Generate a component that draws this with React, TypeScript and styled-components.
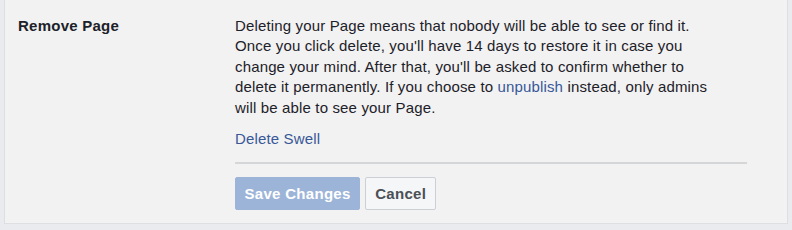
import React from "react";
import styled, { createGlobalStyle } from "styled-components";

const Global = createGlobalStyle`
  html, body { margin: 0; padding: 0; background: #e9ebee; }
  body { font-family: "Liberation Sans", Arial, sans-serif; }
`;

const Page = styled.div`
  width: 792px;
  height: 230px;
  background: #e9ebee;
  padding: 0 4px 0 4px;
  box-sizing: border-box;
`;

const Panel = styled.div`
  background: #f2f2f2;
  border: 1px solid #dddfe2;
  border-top: none;
  height: 224px;
  box-sizing: border-box;
  display: grid;
  grid-template-columns: 217px 1fr;
  padding: 16px 40px 0 13px;
`;

const Label = styled.div`
  font-size: 15px;
  letter-spacing: 0.25px;
  font-weight: bold;
  color: #1d2129;
  line-height: 20px;
`;

const Content = styled.div`
  display: flex;
  flex-direction: column;
`;

const Text = styled.p`
  margin: 0;
  font-size: 15px;
  letter-spacing: 0.15px;
  line-height: 20.4px;
  color: #1d2129;
`;

const Link = styled.a`
  color: #385898;
  text-decoration: none;
  cursor: pointer;
`;

const DeleteLink = styled(Link)`
  font-size: 15px;
  letter-spacing: 0.15px;
  line-height: 20px;
  margin-top: 11px;
`;

const Divider = styled.div`
  height: 2px;
  background: #d5d6d8;
  margin-top: 13px;
`;

const Actions = styled.div`
  display: flex;
  gap: 5px;
  margin-top: 13px;
`;

const Button = styled.button<{ $primary?: boolean }>`
  font-family: "Liberation Sans", Arial, sans-serif;
  font-size: 15px;
  letter-spacing: 0.3px;
  font-weight: bold;
  height: 33px;
  padding: 0 ${(p) => (p.$primary ? "8.5px" : "9px")};
  border-radius: 2px;
  border: 1px solid ${(p) => (p.$primary ? "#9cb4d8" : "#ccd0d5")};
  background: ${(p) => (p.$primary ? "#9cb4d8" : "#f5f6f7")};
  color: ${(p) => (p.$primary ? "#ffffff" : "#4b4f56")};
  cursor: pointer;
`;

export default function App() {
  return (
    <>
      <Global />
      <Page>
        <Panel>
          <Label>Remove Page</Label>
          <Content>
            <Text>
              Deleting your Page means that nobody will be able to see or find it.
              <br />
              Once you click delete, you'll have 14 days to restore it in case you
              <br />
              change your mind. After that, you'll be asked to confirm whether to
              <br />
              delete it permanently. If you choose to <Link>unpublish</Link> instead, only admins
              <br />
              will be able to see your Page.
            </Text>
            <DeleteLink>Delete Swell</DeleteLink>
            <Divider />
            <Actions>
              <Button $primary>Save Changes</Button>
              <Button>Cancel</Button>
            </Actions>
          </Content>
        </Panel>
      </Page>
    </>
  );
}
